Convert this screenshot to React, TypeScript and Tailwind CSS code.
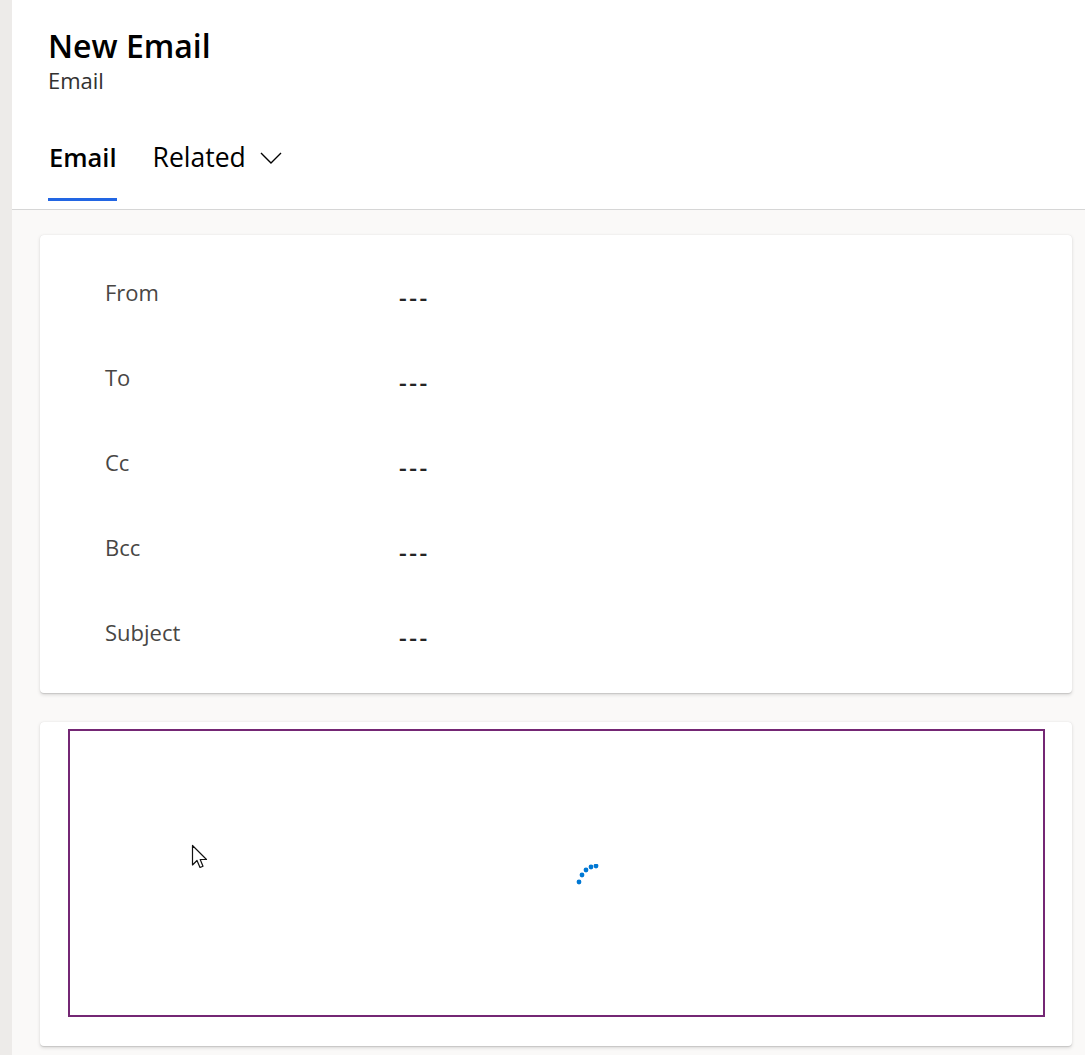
const FIELDS = ["From", "To", "Cc", "Bcc", "Subject"];

const font = { fontFamily: '"Segoe UI", "Open Sans", "Noto Sans", sans-serif' };

function Spinner() {
  // partial arc of dots, like the fluent loading ring
  const dots = [
    [3, 18],
    [6, 11],
    [10, 6],
    [15, 3],
    [20, 2],
  ];
  return (
    <svg width="24" height="22" viewBox="0 0 24 22" className="ml-[62px] mt-[4px]">
      {dots.map(([x, y], i) => (
        <circle key={i} cx={x} cy={y} r="2.4" fill="#0078d4" />
      ))}
    </svg>
  );
}

function Cursor() {
  return (
    <svg width="20" height="28" viewBox="0 0 20 28" className="absolute left-[121px] top-[113px]">
      <path
        d="M1.5 1.5 L1.5 21 L6 16.5 L9 23.5 L12 22.2 L9.2 15.5 L15.5 15.5 Z"
        fill="#fff"
        stroke="#111"
        strokeWidth="1.2"
        strokeLinejoin="round"
      />
    </svg>
  );
}

function Chevron() {
  return (
    <svg width="22" height="12" viewBox="0 0 22 12" className="mt-[2px]">
      <path d="M1 1 L11 11 L21 1" fill="none" stroke="#000" strokeWidth="1.4" />
    </svg>
  );
}

export default function App() {
  return (
    <div className="flex min-h-[1055px] w-full bg-[#faf9f8] text-[#323130]" style={font}>
      <div className="w-[12px] shrink-0 bg-[#edebe9]" />
      <div className="flex flex-1 flex-col">
        <div className="border-b border-[#d6d6d6] bg-white pl-[36px] pt-[26px]">
          <h1 className="text-[32px] font-semibold leading-[40px] text-black">New Email</h1>
          <div className="text-[22px] leading-[28px] text-[#323130]">Email</div>
          <div className="mt-[47px] flex items-start gap-[36px]">
            <div className="flex flex-col">
              <span className="pl-[1px] text-[25.5px] font-semibold leading-[32px] text-black">Email</span>
              <div className="mt-[25px] h-[3px] w-full bg-[#2266e3]" />
              <div className="h-[8px]" />
            </div>
            <div className="flex items-center gap-[14px]">
              <span className="text-[26.5px] leading-[32px] text-black">Related</span>
              <Chevron />
            </div>
          </div>
        </div>

        <div className="flex flex-col gap-[29px] pb-[9px] pl-[28px] pr-[13px] pt-[25px]">
          <div className="rounded-[4px] bg-white pb-[18px] pl-[65px] pt-[15px] shadow-[0_1.6px_3.6px_rgba(0,0,0,0.13),0_0.3px_0.9px_rgba(0,0,0,0.11)]">
            {FIELDS.map((f) => (
              <div key={f} className="flex h-[85px] items-center">
                <span className="w-[294px] text-[22px] text-[#484644]">{f}</span>
                <span className="mt-[8px] text-[24px] font-semibold tracking-[2.5px] text-[#242424]">---</span>
              </div>
            ))}
          </div>

          <div className="rounded-[4px] bg-white pb-[29px] pl-[28px] pr-[27px] pt-[7px] shadow-[0_1.6px_3.6px_rgba(0,0,0,0.13),0_0.3px_0.9px_rgba(0,0,0,0.11)]">
            <div className="relative flex h-[288px] items-center justify-center border-2 border-[#742774]">
              <Spinner />
              <Cursor />
            </div>
          </div>
        </div>
      </div>
    </div>
  );
}
